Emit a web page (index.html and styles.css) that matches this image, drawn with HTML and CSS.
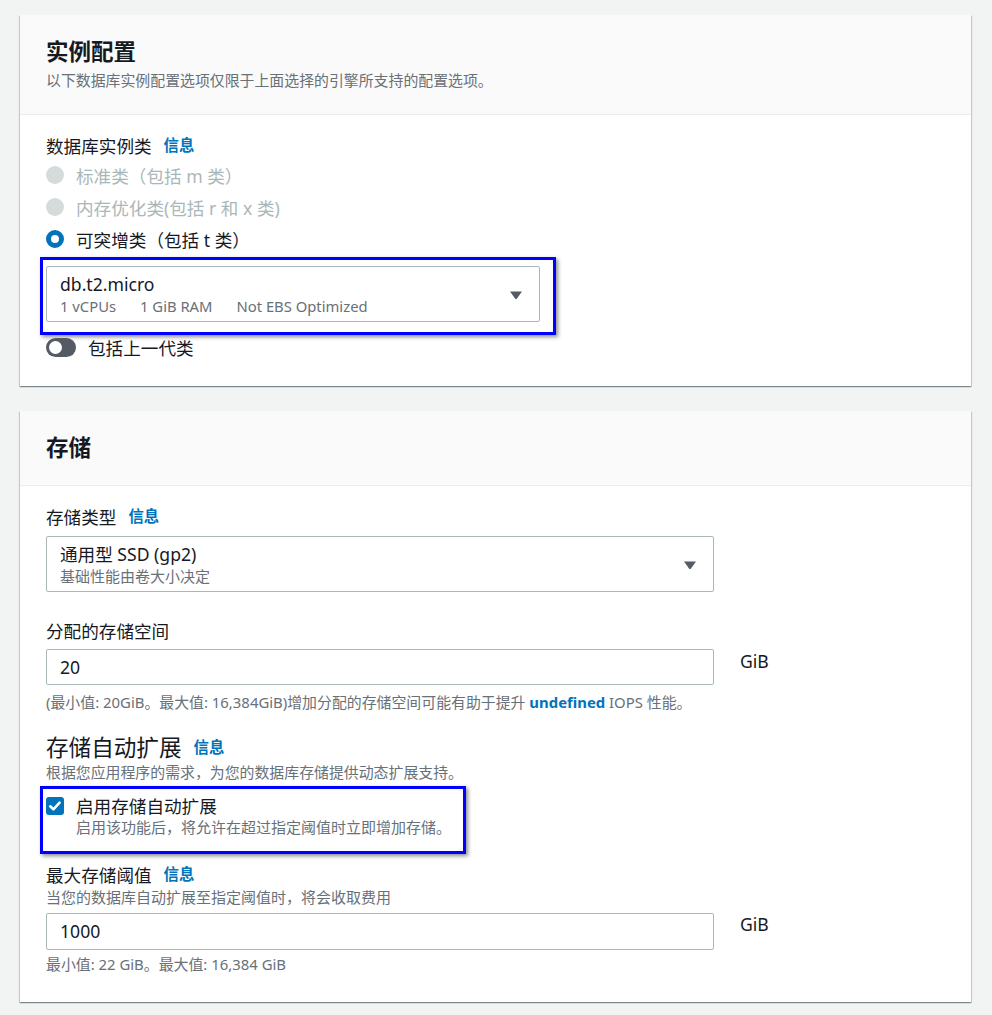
FILE: index.html
```html
<!DOCTYPE html>
<html lang="zh-CN">
<head>
<meta charset="utf-8">
<title>实例配置</title>
<link rel="stylesheet" href="styles.css">
</head>
<body>
<div class="page">
  <section class="card">
    <header class="card-header">
      <h2 class="card-title">实例配置</h2>
      <p class="card-desc">以下数据库实例配置选项仅限于上面选择的引擎所支持的配置选项。</p>
    </header>
    <div class="card-body card-body-1">
      <div class="label-row"><span class="label">数据库实例类</span><a class="info">信息</a></div>
      <div class="radio-list">
        <div class="radio-row disabled"><span class="radio"></span><span>标准类（包括 m 类）</span></div>
        <div class="radio-row disabled"><span class="radio"></span><span>内存优化类(包括 r 和 x 类)</span></div>
        <div class="radio-row"><span class="radio checked"></span><span>可突增类（包括 t 类）</span></div>
      </div>
      <div class="highlight-wrap select-wrap-1">
        <div class="select select-small">
          <div class="select-text">
            <div class="select-main">db.t2.micro</div>
            <div class="select-sub"><span>1 vCPUs</span><span>1 GiB RAM</span><span>Not EBS Optimized</span></div>
          </div>
          <svg class="caret" width="14" height="10" viewBox="0 0 14 10"><path d="M1 1.5 H13 L7.8 8.8 Q7 9.6 6.2 8.8 Z" fill="#545b64"/></svg>
        </div>
        <div class="highlight hl-select"></div>
      </div>
      <div class="toggle-row"><span class="toggle"><span class="knob"></span></span><span>包括上一代类</span></div>
    </div>
  </section>

  <section class="card">
    <header class="card-header card-header-2">
      <h2 class="card-title">存储</h2>
    </header>
    <div class="card-body card-body-2">
      <div class="label-row"><span class="label">存储类型</span><a class="info">信息</a></div>
      <div class="select select-wide">
        <div class="select-text">
          <div class="select-main">通用型 SSD (gp2)</div>
          <div class="select-sub">基础性能由卷大小决定</div>
        </div>
        <svg class="caret" width="14" height="10" viewBox="0 0 14 10"><path d="M1 1.5 H13 L7.8 8.8 Q7 9.6 6.2 8.8 Z" fill="#545b64"/></svg>
      </div>

      <div class="field field-space">
        <div class="label-row"><span class="label">分配的存储空间</span></div>
        <div class="input-row">
          <div class="input">20</div>
          <span class="unit">GiB</span>
        </div>
        <p class="hint">(最小值: 20GiB。最大值: 16,384GiB)增加分配的存储空间可能有助于提升 <b class="link">undefined</b> IOPS 性能。</p>
      </div>

      <div class="autoscale">
        <div class="sub-heading-row"><h3 class="sub-heading">存储自动扩展</h3><a class="info">信息</a></div>
        <p class="sub-desc">根据您应用程序的需求，为您的数据库存储提供动态扩展支持。</p>
        <div class="highlight-wrap check-wrap">
          <div class="check-row">
            <span class="checkbox"><svg width="18" height="18" viewBox="0 0 18 18"><path d="M4.2 9.3 L7.4 12.3 L13.6 5.6" fill="none" stroke="#fff" stroke-width="2.6" stroke-linecap="round" stroke-linejoin="round"/></svg></span>
            <div class="check-text">
              <div class="check-main">启用存储自动扩展</div>
              <div class="check-sub">启用该功能后，将允许在超过指定阈值时立即增加存储。</div>
            </div>
          </div>
          <div class="highlight hl-check"></div>
        </div>
      </div>

      <div class="field field-max">
        <div class="label-row"><span class="label">最大存储阈值</span><a class="info">信息</a></div>
        <p class="field-desc">当您的数据库自动扩展至指定阈值时，将会收取费用</p>
        <div class="input-row">
          <div class="input">1000</div>
          <span class="unit">GiB</span>
        </div>
        <p class="hint">最小值: 22 GiB。最大值: 16,384 GiB</p>
      </div>
    </div>
  </section>
</div>
</body>
</html>
```
FILE: styles.css
```css
html, body {
  margin: 0;
  padding: 0;
  background: #f2f3f3;
}
body {
  font-family: "Noto Sans", "Noto Sans CJK SC", sans-serif;
  color: #16191f;
}
.page {
  padding: 15px 21px 14px 20px;
  display: flex;
  flex-direction: column;
  gap: 25px;
}
.card {
  background: #fff;
  box-shadow: 0 1px 1px 0 rgba(0, 28, 36, 0.3), 1px 1px 1px 0 rgba(0, 28, 36, 0.15), -1px 1px 1px 0 rgba(0, 28, 36, 0.15);
}
.card-header {
  background: #fafafa;
  border-bottom: 1px solid #eaeded;
  padding: 19.5px 26px 20.5px;
}
.card-title {
  margin: 0;
  font-size: 22.5px;
  line-height: 34px;
  font-weight: 700;
}
.card-desc {
  margin: 0 0 3px;
  font-size: 14.9px;
  line-height: 22px;
  color: #687078;
}
.card-body {
  padding: 20px 26px 27px;
}
.label-row {
  display: flex;
  align-items: center;
  height: 22px;
}
.label {
  font-size: 17.6px;
  line-height: 22px;
}
.info {
  font-size: 15.4px;
  font-weight: 700;
  color: #0073bb;
  margin-left: 12px;
  line-height: 22px;
}
.radio-list {
  margin-top: 2px;
  display: flex;
  flex-direction: column;
}
.radio-row {
  height: 32px;
  display: flex;
  align-items: center;
  font-size: 17.6px;
}
.radio-row.disabled {
  color: #aab7b8;
}
.radio {
  width: 18px;
  height: 18px;
  box-sizing: border-box;
  border-radius: 50%;
  background: #d5dbdb;
  margin-right: 12px;
  flex: none;
}
.radio.checked {
  background: #fff;
  border: 5.5px solid #0073bb;
}
.highlight-wrap {
  position: relative;
}
.highlight {
  position: absolute;
  border: 3px solid #0000ff;
  box-shadow: 2px 2px 4px rgba(0, 0, 0, 0.45);
  pointer-events: none;
}
.select-wrap-1 {
  margin-top: 11px;
  width: 494px;
}
.hl-select {
  top: -9px;
  left: -6px;
  right: -16px;
  bottom: -13px;
}
.select {
  box-sizing: border-box;
  height: 56px;
  border: 1px solid #aab7b8;
  border-radius: 2px;
  padding: 6px 16px 0 13px;
  display: flex;
  align-items: flex-start;
  justify-content: space-between;
}
.select-small {
  width: 494px;
}
.select-wide {
  width: 668px;
  margin-top: 8px;
}
.select-main {
  font-size: 17.6px;
  line-height: 22px;
}
.select-sub {
  margin-top: 1px;
  font-size: 14.8px;
  line-height: 20px;
  color: #687078;
  display: flex;
  gap: 24px;
}
.select-wide .select-sub {
  font-size: 15px;
}
.caret {
  flex: none;
  align-self: center;
  margin-top: -5px;
}
.toggle-row {
  margin-top: 14px;
  display: flex;
  align-items: center;
  height: 22px;
  font-size: 17.6px;
}
.toggle {
  width: 30px;
  height: 19px;
  border-radius: 10px;
  background: #545b64;
  margin-right: 12px;
  position: relative;
  display: inline-block;
}
.knob {
  position: absolute;
  left: 3px;
  top: 3px;
  width: 13px;
  height: 13px;
  border-radius: 50%;
  background: #fff;
}
.card-body-1 {
  padding-bottom: 28px;
}
.field-space {
  margin-top: 28px;
}
.input-row {
  display: flex;
  align-items: flex-start;
  margin-top: 7px;
}
.input {
  box-sizing: border-box;
  width: 668px;
  height: 36px;
  border: 1px solid #aab7b8;
  border-radius: 2px;
  padding: 0 13px;
  font-size: 17.6px;
  line-height: 34px;
}
.unit {
  margin-left: 26px;
  margin-top: 1px;
  font-size: 17.6px;
  line-height: 22px;
}
.hint {
  margin: 8px 0 0;
  font-size: 14.9px;
  line-height: 18px;
  color: #687078;
}
.link {
  color: #0073bb;
  font-weight: 700;
}
.autoscale {
  margin-top: 23px;
}
.sub-heading-row {
  display: flex;
  align-items: center;
  height: 28px;
}
.sub-heading {
  margin: 0;
  font-size: 22.6px;
  line-height: 28px;
  font-weight: 400;
}
.sub-desc {
  margin: 0;
  font-size: 14.9px;
  line-height: 20px;
  color: #687078;
}
.check-wrap {
  margin-top: 13px;
  width: 411px;
}
.hl-check {
  top: -9px;
  left: -6px;
  right: -9px;
  bottom: -17px;
}
.check-row {
  display: flex;
  align-items: flex-start;
}
.checkbox {
  width: 18px;
  height: 18px;
  border-radius: 3px;
  background: #0073bb;
  margin-right: 12px;
  margin-top: 2px;
  flex: none;
  display: flex;
}
.check-main {
  font-size: 17.6px;
  line-height: 22px;
}
.check-sub {
  font-size: 15px;
  line-height: 20px;
  color: #687078;
  white-space: nowrap;
}
.field-max {
  margin-top: 27px;
}
.field-desc {
  margin: 0;
  font-size: 15px;
  line-height: 22px;
  color: #687078;
}
.field-max .input-row {
  margin-top: 5px;
}
.field-max .input {
  height: 37px;
}
.field-max .unit {
  margin-top: 0;
}
.field-max .hint {
  margin-top: 5px;
}
.card-body-2 {
  padding-bottom: 29px;
}
```
